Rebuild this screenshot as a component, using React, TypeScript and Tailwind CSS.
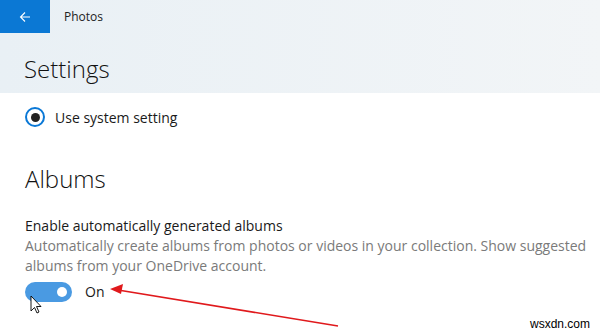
import React from "react";

const font = { fontFamily: '"Open Sans", "Noto Sans", sans-serif' };

function BackArrow() {
  return (
    <svg width="12" height="12" viewBox="0 0 12 12" fill="none" stroke="white" strokeWidth="1.1">
      <path d="M11 6H1.5M6 1.5L1.5 6L6 10.5" />
    </svg>
  );
}

function Toggle() {
  return (
    <div className="w-[47px] h-[20px] rounded-full bg-[#4a9ae2] flex items-center justify-end pr-[5px]">
      <div className="w-[10px] h-[10px] rounded-full bg-white" />
    </div>
  );
}

export default function App() {
  return (
    <div className="relative w-[600px] h-[336px] overflow-hidden bg-white text-[#1a1a1a]" style={font}>
      <div className="h-[93px] bg-gradient-to-r from-[#e9f0f5] to-[#f2f5f7]">
        <div className="flex items-center h-[33px]">
          <div className="w-[50px] h-[33px] bg-[#0b78d4] flex items-center justify-center">
            <BackArrow />
          </div>
          <span className="ml-[14px] text-[12px] text-[#222]">Photos</span>
        </div>
        <div className="pl-[24px] pt-[24px] text-[24px] leading-none font-light text-[#111]">Settings</div>
      </div>

      <div className="pl-[25px]">
        <div className="flex items-center mt-[14px] h-[20px]">
          <div className="w-[20px] h-[20px] rounded-full border-[2px] border-[#0a78d6] flex items-center justify-center">
            <div className="w-[9px] h-[9px] rounded-full bg-[#222]" />
          </div>
          <span className="ml-[10px] text-[14px]">Use system setting</span>
        </div>

        <div className="mt-[40px] text-[24px] leading-none font-light text-[#111]">Albums</div>

        <div className="mt-[26px] text-[14px] leading-[18px]">Enable automatically generated albums</div>
        <div className="mt-[1px] text-[14px] leading-[20px] text-[#7a7a7a]">
          Automatically create albums from photos or videos in your collection. Show suggested
          <br />
          albums from your OneDrive account.
        </div>

        <div className="flex items-center mt-[5px]">
          <Toggle />
          <span className="ml-[13px] text-[14px]">On</span>
        </div>
      </div>

      <svg className="absolute left-0 top-0" width="600" height="336" viewBox="0 0 600 336">
        <line x1="338" y1="326" x2="118" y2="290" stroke="#e0191c" strokeWidth="1.6" />
        <path d="M110 289 L123 284 L121 294 Z" fill="#e0191c" />
        <path d="M31 296 L31 311 L34.5 307.5 L37 313 L39 312 L36.5 306.5 L41 306.5 Z" fill="white" stroke="black" strokeWidth="0.9" strokeLinejoin="round" />
      </svg>

      <div className="absolute right-[10px] bottom-[3px] text-[12px] text-black" style={{ fontFamily: '"Liberation Sans", sans-serif' }}>
        wsxdn.com
      </div>
    </div>
  );
}
